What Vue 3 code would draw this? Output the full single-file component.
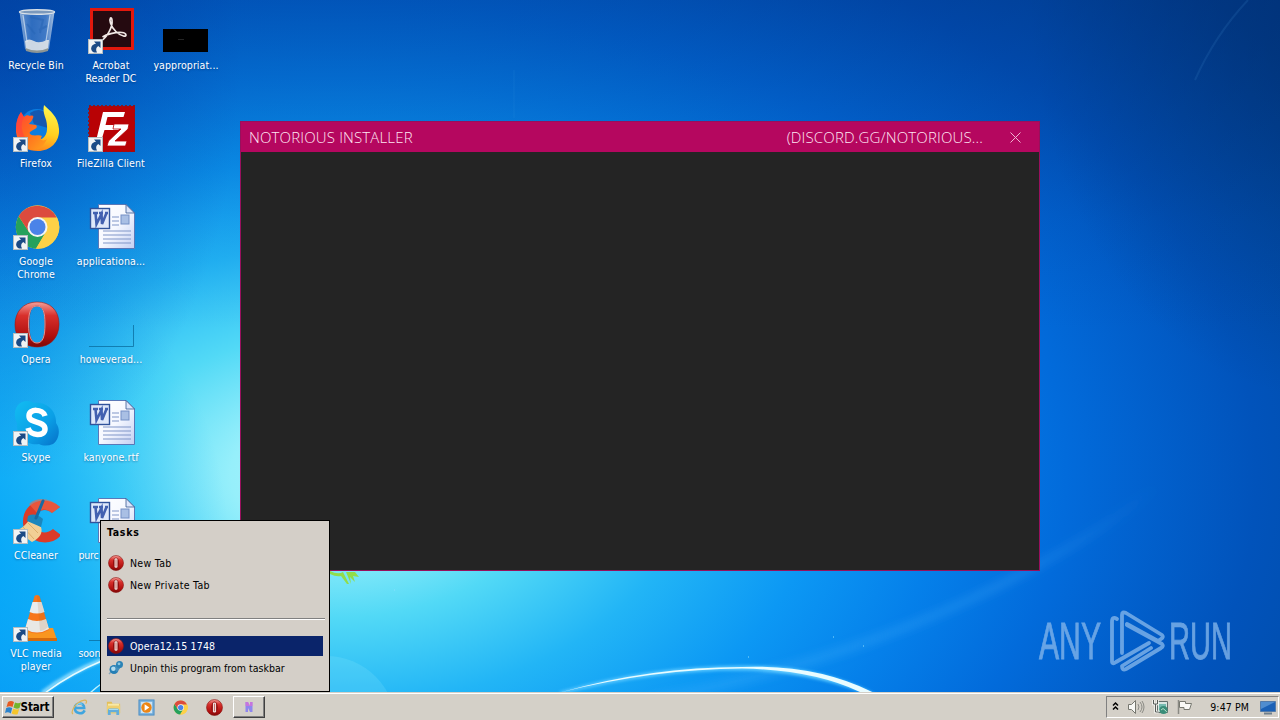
<script setup>
    import { ref } from 'vue'

    // desktop shortcuts, filled column by column (7 rows each)
    const shortcuts = [
        { icon: 'bin', label: 'Recycle Bin' },
        { icon: 'firefox', label: 'Firefox', link: true },
        { icon: 'chrome', label: 'Google Chrome', link: true },
        { icon: 'opera', label: 'Opera', link: true },
        { icon: 'skype', label: 'Skype', link: true },
        { icon: 'ccleaner', label: 'CCleaner', link: true },
        { icon: 'vlc', label: 'VLC media player', link: true },
        { icon: 'acrobat', label: 'Acrobat Reader DC', link: true },
        { icon: 'filezilla', label: 'FileZilla Client', link: true },
        { icon: 'word', label: 'applicationa...' },
        { icon: 'blank', label: 'howeverad...' },
        { icon: 'word', label: 'kanyone.rtf' },
        { icon: 'word', label: 'purc', covered: true },
        { icon: 'blank', label: 'soon', covered: true },
        { icon: 'black', label: 'yappropriat...' }
    ]

    const tasks = [
        { icon: 'opera-ball', label: 'New Tab' },
        { icon: 'opera-ball', label: 'New Private Tab' }
    ]

    const programs = [
        { icon: 'opera-ball', label: 'Opera12.15 1748' },
        { icon: 'pin', label: 'Unpin this program from taskbar' }
    ]

    const pinned = ['ie', 'folder', 'media', 'chrome-small', 'opera-ball']

    const selected = ref(0)
    const isWindowOpen = ref(true)
</script>

<template>
    <div class="screen">
        <!-- shared icon shapes -->
        <svg class="defs" width="0" height="0" aria-hidden="true">
            <defs>
                <linearGradient id="gRed" x1="0" y1="0" x2="0" y2="1">
                    <stop offset="0" stop-color="#f3a09a" />
                    <stop offset=".3" stop-color="#d8302c" />
                    <stop offset=".75" stop-color="#b0100f" />
                    <stop offset="1" stop-color="#7d0808" />
                </linearGradient>
                <linearGradient id="gGlass" x1="0" y1="0" x2="1" y2="0">
                    <stop offset="0" stop-color="#b9d0e8" stop-opacity=".75" />
                    <stop offset=".35" stop-color="#5f8fd0" stop-opacity=".5" />
                    <stop offset=".75" stop-color="#7ba4da" stop-opacity=".6" />
                    <stop offset="1" stop-color="#d5e2ef" stop-opacity=".8" />
                </linearGradient>
                <linearGradient id="gFox" x1="0" y1="0" x2="1" y2="1">
                    <stop offset="0" stop-color="#ff4338" />
                    <stop offset=".45" stop-color="#ff6a20" />
                    <stop offset="1" stop-color="#ffa51c" />
                </linearGradient>
                <linearGradient id="gTail" x1=".4" y1="0" x2=".2" y2="1">
                    <stop offset="0" stop-color="#fff44a" />
                    <stop offset=".55" stop-color="#ffce20" />
                    <stop offset="1" stop-color="#ff7a1c" />
                </linearGradient>
                <linearGradient id="gSkype" x1="0" y1="0" x2="1" y2="1">
                    <stop offset="0" stop-color="#12bdf2" />
                    <stop offset=".6" stop-color="#0a9fe6" />
                    <stop offset="1" stop-color="#0670c8" />
                </linearGradient>
                <linearGradient id="gPage" x1="0" y1="0" x2="1" y2="1">
                    <stop offset="0" stop-color="#fff" />
                    <stop offset=".5" stop-color="#f6f8ff" />
                    <stop offset="1" stop-color="#c3cff2" />
                </linearGradient>
            </defs>

            <symbol id="arrow" viewBox="0 0 15 15">
                <rect x=".5" y=".5" width="14" height="14" fill="#f1f3f4" stroke="#b4bdc1" />
                <path d="M6 2.500H12.500V9L10.300 7C8 8.500 7.500 10.500 9 13.500H6C3.500 12.500 2.500 10 3.500 7.800C4.300 6 6 5 8 4.800z" fill="#1b4a85" />
            </symbol>

            <symbol id="bin" viewBox="0 0 48 48">
                <path d="M7.500 6L13 43Q25 50 37 43L42.500 6z" fill="url(#gGlass)" />
                <path d="M12 9h26l-4 24Q25 38 16 33z" fill="#2f6fc4" opacity=".35" />
                <path d="M13 35Q17 32 22 35T35 34L37 34 36 43Q25 49 14 43z" fill="#e8eaea" opacity=".85" />
                <path d="M13.500 42Q25 47 36.500 42L36 45Q25 49 14 45z" fill="#8d9594" />
                <path d="M18 11l13 3-3 13M15 18l8 10M27 24l8-4" stroke="#2866b5" stroke-width="2" fill="none" opacity=".6" />
                <path d="M11 9l4 27M38 9l-4 26" stroke="#e9f3fa" stroke-width="1.200" opacity=".6" />
                <ellipse cx="25" cy="6" rx="17.500" ry="2.300" fill="#7b99bc" stroke="#d9e1e8" stroke-width="1.400" />
            </symbol>

            <symbol id="acrobat" viewBox="0 0 48 48">
                <rect x="3" y="2" width="44" height="42" fill="#e2180d" />
                <rect x="6" y="5" width="38" height="36" fill="#250a10" />
                <path d="M14 35C19 32 26 22 25 14C24.500 10 22 12 23.500 17C25.500 24 32 29 36.500 30C40 31 40 27 35 26.500C28 26 19 28.500 15.500 31" fill="none" stroke="#f2e9e6" stroke-width="1.700" />
            </symbol>

            <symbol id="black" viewBox="0 0 48 48">
                <path d="M1 23h45v23H1z" fill="#000" />
                <path d="M16 33.500h6" stroke="#252525" />
            </symbol>

            <symbol id="blank" viewBox="0 0 48 48">
                <path d="M2 46.500h44.500V25" fill="none" stroke="#096b9c" stroke-width="1" opacity=".75" />
            </symbol>

            <symbol id="firefox" viewBox="0 0 48 48">
                <circle cx="25" cy="22" r="17" fill="#0a7de0" />
                <path d="M18 9Q27 3 34 9L36 24 22 20z" fill="#1558b0" />
                <path d="M32 1C38 7 46 12 47 25C48 38 38 47 26 47C16 47 8 43 5 33L20 36C30 38 36 32 35 22C35 14 30 10 32 1z" fill="url(#gTail)" />
                <path d="M4 24C4 18 6 12 9 8L12 13C14 11 16 11 18 12C21 11 22 12 21 14C20 17 18 18 17 20L24 21C26 23 24 25 21 26C18 28 17 28 18 30C22 33 27 30 30 32C27 36 31 38 35 35C31 43 28 46 22 46C11 44 3 36 4 24z" fill="url(#gFox)" />
                <path d="M4 24C4 18 6 12 9 8L12 13C8 19 9 30 16 37C12 38 5 33 4 24z" fill="#ff3e44" opacity=".55" />
            </symbol>

            <symbol id="filezilla" viewBox="0 0 48 48">
                <rect x="2" y="2" width="46" height="46" fill="#b80205" stroke="#8c1420" stroke-width="2" stroke-dasharray="2 2" />
                <path d="M16 8h22l-1.500 5H20.500l-2 8H33l-1.500 5H17.500L13 41H8z" fill="#fff" />
                <path d="M27 20h15l-1 5-13 12h12l-1.500 5H20l1.500-5 12.500-12H26z" fill="#fff" stroke="#b80205" stroke-width=".8" />
            </symbol>

            <symbol id="chrome" viewBox="0 0 48 48">
                <circle cx="25.500" cy="25" r="21.700" fill="#fdd147" />
                <path d="M6.700 14.200A21.700 21.700 0 0 0 24 46.600L33.500 30.500 17 30z" fill="#25a15c" />
                <path d="M25.500 15.500H45A21.700 21.700 0 0 1 24 46.700L34 30z" fill="#fdd147" />
                <path d="M6.700 14.200A21.700 21.700 0 0 1 44.600 15.500H25.500L17 30z" fill="#dc4b3e" />
                <circle cx="25.500" cy="25" r="10" fill="#f5f5f2" />
                <circle cx="25.500" cy="25" r="8" fill="#4b83e8" />
            </symbol>

            <symbol id="word" viewBox="0 0 48 48">
                <path d="M11.500 2.500H39L47.500 11V46.500H11.500z" fill="url(#gPage)" stroke="#5a78b8" />
                <path d="M39 2.500V11h8.500z" fill="#dce5fa" stroke="#38588f" stroke-width=".8" />
                <path d="M25 15h7M25 19h7M25 23h7M16 29h28M16 33h28M16 37h28M16 41h28" stroke="#8095c8" stroke-width="1.200" />
                <rect x="34" y="13" width="8" height="9" fill="#a9bfe4" stroke="#7590c6" />
                <rect x="3.500" y="6.500" width="19" height="20" fill="#dfe8fa" stroke="#31539b" stroke-width="1.400" />
                <path d="M6 11h5M12 11h4M18 11h3M8.500 11l1 11 5-10 .5 10 4.500-11" fill="none" stroke="#4260b0" stroke-width="2.600" />
            </symbol>

            <symbol id="opera" viewBox="0 0 48 48">
                <path fill-rule="evenodd" d="M25 2C11 2 3 12 3 25S12 47 25 47 47 38 47 24 38 2 25 2zM25 6C31 6 33 12 33 24S31 43 25 43 17 36 17 24 19 6 25 6z" fill="url(#gRed)" stroke="#9b1714" stroke-width=".6" />
                <path d="M16.500 24C16.500 12 19 6 25 6s8 6 8 18-2 19-8 19-8.500-7-8.500-19z" fill="none" stroke="#dc9696" stroke-width="1" />
            </symbol>

            <symbol id="skype" viewBox="0 0 48 48">
                <path d="M6 7C10 2 18 2 22 5C34 3 45 13 44 25C49 31 47 42 41 46C36 48 31 48 27 46C15 48 4 38 5 25C2 19 2 12 6 7z" fill="url(#gSkype)" />
                <path d="M33 18C31 11 17 10 17 18C17 26 33 22 33 31C33 39 18 38 16 30" fill="none" stroke="#fff" stroke-width="5.500" />
            </symbol>

            <symbol id="ccleaner" viewBox="0 0 48 48">
                <path d="M48 11L40 17C32 10 22 16 23 27C24 37 34 39 41 33L49 39C38 53 12 46 11 27C10 7 32-3 48 11z" fill="#dc3b28" />
                <path d="M48 11L40 17C34 12 28 13 25 17L17 8C26 0 38 2 48 11z" fill="#f0694a" opacity=".6" />
                <path d="M17 24L29 31C31 37 28 42 20 46L3 34C8 34 13 30 17 24z" fill="#f2cf95" />
                <path d="M11 31l11 12M7 34l8 8M16 27l10 10" stroke="#dcae6b" stroke-width="1" />
                <path d="M16 20Q23 16 31 23L29 31 15 25z" fill="#1b86bd" />
                <path d="M31 5L24 22" stroke="#176ba3" stroke-width="3" stroke-linecap="round" />
            </symbol>

            <symbol id="vlc" viewBox="0 0 48 48">
                <path d="M10 34h31l4 12H6z" fill="#f9961f" />
                <path d="M6 44h39v3H6z" fill="#d56a0c" />
                <path d="M22.500 2Q25 0 27.500 2L37 36Q25 43 13 36z" fill="#f7761b" />
                <path d="M20.500 8h9l3 10q-7.500 3-15 0z" fill="#e9ecee" />
                <path d="M16 25q9 4 18 0l3 10Q25 42 13 35z" fill="#e8e8e5" />
                <path d="M25 2l3 0 8 31q-4 4-8 4z" fill="#aa5d1c" opacity=".15" />
            </symbol>

            <symbol id="opera-ball" viewBox="0 0 16 16">
                <circle cx="8" cy="8" r="7.500" fill="url(#gRed)" stroke="#8c1512" stroke-width=".6" />
                <ellipse cx="8" cy="8" rx="3" ry="5.600" fill="#8e0d0d" />
                <rect x="6.500" y="3.300" width="3" height="9.400" rx="1.200" fill="#efdeda" />
                <path d="M8 4.500v7" stroke="#bf5a55" stroke-width=".8" />
            </symbol>

            <symbol id="pin" viewBox="0 0 16 16">
                <path d="M1 14l5-5" stroke="#86a5b8" stroke-width="1.500" />
                <circle cx="6" cy="9.500" r="4.500" fill="#247eb5" />
                <path d="M5 8l5-5 4 3-5 6z" fill="#438fbd" />
                <circle cx="11.500" cy="4.500" r="3.500" fill="#2b83b6" />
                <circle cx="5.300" cy="8.800" r="2.200" fill="#b3dcee" />
                <circle cx="11" cy="3.800" r="1.400" fill="#8dc8e1" />
            </symbol>

            <symbol id="ie" viewBox="0 0 18 18">
                <path d="M14.500 12C12 17 4 15.500 4 9.500S14 3 14 9.500H5" fill="none" stroke="#3fa5df" stroke-width="2.700" />
                <path d="M2 16C-1 13 6 3 13 1.500C17 .5 17 3 15.500 5" fill="none" stroke="#dcb55a" stroke-width="1.300" />
                <path d="M5.500 7Q8 3.500 12 5.500" fill="none" stroke="#9bdcf5" stroke-width="1" />
            </symbol>

            <symbol id="folder" viewBox="0 0 18 18">
                <path d="M2 3h5l1 2h8v10H2z" fill="#e3bf59" />
                <path d="M3 5h12v4H3z" fill="#f8e9a7" />
                <path d="M2 7h14v8H2z" fill="#f0d070" />
                <path d="M3 17v-5q0-2 2-2h8q2 0 2 2v5h-3v-3H6v3z" fill="#62addb" />
                <path d="M4 11h10" stroke="#b9e5f5" />
            </symbol>

            <symbol id="media" viewBox="0 0 18 18">
                <rect x="1" y="1" width="16" height="16" fill="#74aedb" stroke="#4d8fc4" />
                <rect x="3" y="3" width="12" height="12" fill="#cce3f3" />
                <circle cx="9" cy="9" r="5.500" fill="#ed8514" />
                <path d="M7 5.500l5 3.500-5 3.500z" fill="#fff" />
            </symbol>

            <symbol id="chrome-small" viewBox="-1 -1 52 52">
                <use href="#chrome" width="48" height="48" />
            </symbol>
        </svg>

        <main class="desktop">
            <!-- wallpaper light streaks and leaves -->
            <svg class="wallpaper" viewBox="0 0 1280 692" width="1280" height="692" aria-hidden="true">
                <defs>
                    <filter id="soft" x="-20%" y="-20%" width="140%" height="140%">
                        <feGaussianBlur stdDeviation="4" />
                    </filter>
                    <filter id="glow" x="-10%" y="-100%" width="120%" height="300%">
                        <feGaussianBlur stdDeviation="1.500" />
                    </filter>
                    <linearGradient id="gRay" gradientUnits="userSpaceOnUse" x1="650" y1="700" x2="1160" y2="490">
                        <stop offset="0" stop-color="#54baff" stop-opacity=".25" />
                        <stop offset=".7" stop-color="#54baff" stop-opacity=".2" />
                        <stop offset="1" stop-color="#54baff" stop-opacity="0" />
                    </linearGradient>
                </defs>
                <path d="M650 700Q840 665 1000 585Q1100 535 1165 480" fill="none" stroke="url(#gRay)" stroke-width="9" filter="url(#soft)" />
                <path d="M1195 80Q1215 35 1248 0" fill="none" stroke="#3c87c9" stroke-width="2" opacity=".18" />
                <path d="M514 70v48" stroke="#52a7e3" opacity=".12" />
                <circle cx="326" cy="726" r="70" fill="#9ff0ff" opacity=".16" />
                <path d="M560 693Q650 667 742 667Q820 666 878 697Q817 671 742 669Q654 669 560 693z" fill="#c5f4ff" stroke="#56c6ff" stroke-width="3" filter="url(#glow)" />
                <path d="M560 692.500Q650 667 742 667Q820 664 878 695H866Q818 670 742 668.500Q654 669 560 692.500z" fill="#e9fcff" />
                <path d="M42 693Q68 673 104 659" fill="none" stroke="#ace9ff" stroke-width="4" opacity=".8" filter="url(#glow)" />
                <path d="M45 693Q70 674 104 660" fill="none" stroke="#e5fbff" stroke-width="1.500" />
                <path d="M88 695Q95 688 104 682" fill="none" stroke="#baf0ff" stroke-width="1.500" />
                <path d="M330 571q8 4 13 1l6 12-2 0-6-8q-5 1-11-2zM346 572l5 12-1-7 5 5-2-6 6 1-4-5z" fill="#92dc4b" />
                <path d="M748 657h1M863 646h1M833 637h1M394 590h1" stroke="#8edfff" />
            </svg>

            <div class="shortcuts">
                <div v-for="(item, idx) in shortcuts" :key="idx" :class="['shortcut', { covered: item.covered }]">
                    <svg class="shortcut_icon" width="48" height="48">
                        <use :href="'#' + item.icon" width="48" height="48" />
                        <use v-if="item.link" href="#arrow" x="1" y="33" width="15" height="15" />
                    </svg>
                    <span class="shortcut_label">{{ item.label }}</span>
                </div>
            </div>

            <svg class="watermark" viewBox="0 0 240 80" width="240" height="80">
                <g class="watermark_text">
                    <text x="4" y="54" textLength="62" lengthAdjust="spacingAndGlyphs">ANY</text>
                    <text x="134" y="54" textLength="63" lengthAdjust="spacingAndGlyphs">RUN</text>
                </g>
                <g fill="none" stroke="currentColor" stroke-width="3.800" stroke-linejoin="round" stroke-linecap="round">
                    <path d="M82 14Q77 11 77 17V56Q77 60 81 57L114 38" />
                    <path d="M87 48V10Q87 6 91 8L127 30Q129 32 126 34L123 36L92 19" />
                    <path d="M92 20L127 39Q129 41 126 43L91 64Q87 66 87 61L116 43" />
                </g>
            </svg>

            <section v-if="isWindowOpen" class="window">
                <header class="window_bar">
                    <span class="window_title">NOTORIOUS INSTALLER</span>
                    <span class="window_link">(DISCORD.GG/NOTORIOUS...</span>
                    <svg class="window_close" width="11" height="11" @click="isWindowOpen = false">
                        <path d="M.5.5l10 10M10.500.5l-10 10" stroke="#f0b5d2" />
                    </svg>
                </header>
            </section>
        </main>

        <div class="jumplist">
            <strong class="jumplist_title">Tasks</strong>
            <div class="jumplist_group">
                <div v-for="item in tasks" :key="item.label" class="jumplist_item wide">
                    <svg width="16" height="16"><use :href="'#' + item.icon" width="16" height="16" /></svg>
                    <span>{{ item.label }}</span>
                </div>
            </div>
            <div class="jumplist_line"></div>
            <div class="jumplist_group">
                <div
                    v-for="(item, idx) in programs"
                    :key="item.label"
                    :class="['jumplist_item', { active: idx === selected }]"
                    @mouseenter="selected = idx"
                >
                    <svg width="16" height="16"><use :href="'#' + item.icon" width="16" height="16" /></svg>
                    <span>{{ item.label }}</span>
                </div>
            </div>
        </div>

        <footer class="taskbar">
            <button class="start">
                <svg width="17" height="17" viewBox="0 0 17 17">
                    <path d="M3 3q3-2 6 0L7.500 8Q5 6.500 1.500 8z" fill="#e65b22" />
                    <path d="M10 3.500q3 1.500 6 0L14.500 9q-3 1.500-6-.5z" fill="#73b52c" />
                    <path d="M1.200 9q3-1.500 6 0L5.800 14.500Q3 12.500 0 14z" fill="#2a83cd" />
                    <path d="M8.200 9.700q3 1.500 6 .2l-1.600 5.300q-3 1-6-.7z" fill="#f5c52b" />
                </svg>
                Start
            </button>
            <div class="pinned">
                <svg v-for="name in pinned" :key="name" width="17" height="17">
                    <use :href="'#' + name" width="17" height="17" />
                </svg>
            </div>
            <button class="running">
                <svg width="12" height="14" viewBox="0 0 12 14">
                    <path d="M2.500 2h2.500l2 4V2h2.500v10H7L5 8v4H2.500z" fill="#8f86ee" />
                    <path d="M2.500 2h2.500l2 4V2h2.500v4h-7z" fill="#e46ad6" opacity=".65" />
                </svg>
            </button>
            <div class="tray">
                <svg width="9" height="12" viewBox="0 0 9 12">
                    <path d="M2 4.500l2.500-2.500 2.500 2.500M2 8.500l2.500-2.500 2.500 2.500" fill="none" stroke="#000" stroke-width="1.500" />
                </svg>
                <svg width="18" height="16" viewBox="0 0 18 16">
                    <path d="M1.500 5.500h3l4-4v13l-4-4h-3z" fill="#f8f8f5" stroke="#76776f" />
                    <path d="M11 5q2 3 0 6M13 3q4 5 0 10M15 2q4 6 0 12" fill="none" stroke="#8b8b85" />
                </svg>
                <svg width="17" height="16" viewBox="0 0 17 16">
                    <path d="M5.500 2.500h10v11h-10z" fill="#d8e6e2" stroke="#626f6b" />
                    <path d="M7 5h7v6H7z" fill="#75bbb0" />
                    <circle cx="11.500" cy="11" r="4" fill="#398d79" />
                    <path d="M9 11q2-3 4 0t2 1" stroke="#b4dfc7" fill="none" />
                    <path d="M1.500 1v4h4V1M3.500 5v8h3" fill="none" stroke="#f8f8f5" stroke-width="2.500" />
                    <path d="M1.500 1v4h4V1M3.500 5v8h3" fill="none" stroke="#575c58" />
                </svg>
                <svg width="17" height="16" viewBox="0 0 17 16">
                    <path d="M2.500 1v14" stroke="#8a8a84" stroke-width="1.500" />
                    <path d="M3.500 2.500h6v2h6l-2 6H8v-2H3.500z" fill="#f9f9f6" stroke="#777870" />
                </svg>
                <time class="clock">9:47 PM</time>
                <svg class="show_desktop" width="16" height="15" viewBox="0 0 16 15">
                    <path d="M.5 1.500h15v10H.5z" fill="#1b61b6" stroke="#547ba9" />
                    <path d="M1 2h14L1 9z" fill="#508dcf" />
                    <path d="M4 13.500h8" stroke="#6f7f8c" stroke-width="2" />
                </svg>
            </div>
        </footer>
    </div>
</template>

<style>
    body {
        margin: 0;
        overflow: hidden;
    }
</style>

<style scoped>
    .screen {
        position: relative;
        display: flex;
        flex-direction: column;
        width: 1280px;
        height: 720px;
        overflow: hidden;
        font-family: "DejaVu Sans Condensed", "DejaVu Sans", sans-serif;
        font-stretch: condensed;
        font-size: 10.5px;
        cursor: default;
    }

    .defs {
        position: absolute;
    }

    /* 桌面 */
    .desktop {
        position: relative;
        height: 692px;
        background:
            linear-gradient(to bottom, rgba(0, 42, 120, 0.35) 0, rgba(0, 60, 150, 0.1) 220px, rgba(0, 60, 150, 0) 330px),
            radial-gradient(ellipse 240px 420px at 0 60px, rgba(0, 60, 165, 0.5), rgba(0, 60, 165, 0)),
            radial-gradient(ellipse 250px 330px at -20px 560px, rgba(0, 165, 248, 0.8), rgba(0, 170, 250, 0)),
            radial-gradient(ellipse 300px 400px at 1330px 0, rgba(0, 40, 90, 0.55), rgba(0, 40, 90, 0)),
            radial-gradient(ellipse 950px 620px at 335px 475px, #b4f6fc 0, #96effb 11%, #52d9f6 23%, #22b5f6 37%, #0c98f4 51%, #0580ea 64%, #026bdb 77%, #0153bb 97%, #01479c 120%);
    }

    .wallpaper {
        position: absolute;
        top: 0;
        left: 0;
    }

    .shortcuts {
        position: relative;
        display: grid;
        grid-auto-flow: column;
        grid-template-rows: repeat(7, 98px);
        grid-auto-columns: 75px;
        margin-left: -1.5px;
        padding-top: 6px;
        width: 225px;
    }

    .shortcut {
        display: flex;
        flex-direction: column;
        align-items: center;
        gap: 5px;
    }

    .shortcut_icon {
        display: block;
        overflow: visible;
        flex-shrink: 0;
    }

    .shortcut_label {
        max-width: 70px;
        color: #fff;
        line-height: 13px;
        letter-spacing: 0.1px;
        text-align: center;
        text-shadow: 0 1px 2px rgba(0, 35, 90, 0.45);
    }

    .shortcut.covered .shortcut_label {
        align-self: flex-start;
        padding-left: 5px;
        letter-spacing: -0.2px;
    }

    /* 浮水印 */
    .watermark {
        position: absolute;
        left: 1035px;
        top: 605px;
        color: #81b4ea;
        opacity: 0.8;
    }

    .watermark_text {
        fill: currentColor;
        stroke: currentColor;
        stroke-width: 0.9px;
        font-family: "Liberation Sans Narrow", "Liberation Sans", sans-serif;
        font-size: 52px;
    }

    /* 安裝程式視窗 */
    .window {
        position: absolute;
        left: 240px;
        top: 121px;
        box-sizing: border-box;
        width: 800px;
        height: 450px;
        border: 1px solid #98105c;
        background-color: #242424;
    }

    .window_bar {
        display: flex;
        align-items: center;
        box-sizing: border-box;
        height: 30px;
        padding: 0 18px 0 8px;
        background-color: #b5075f;
        color: #ffe6f2;
        font-family: "Open Sans", sans-serif;
        font-weight: 300;
        font-stretch: normal;
        font-size: 15px;
        letter-spacing: 0.15px;
    }

    .window_link {
        margin-left: auto;
        margin-right: 27px;
    }

    /* 捷徑清單 */
    .jumplist {
        position: absolute;
        left: 100px;
        bottom: 28px;
        box-sizing: border-box;
        width: 230px;
        height: 172px;
        padding: 5px 6px;
        border: 1px solid #000;
        background-color: #d4cfc8;
        color: #000;
    }

    .jumplist_title {
        display: block;
        height: 27px;
        line-height: 13px;
        letter-spacing: 0.7px;
    }

    .jumplist_group {
        display: flex;
        flex-direction: column;
        gap: 2px;
        width: 216px;
    }

    .jumplist_item {
        display: flex;
        align-items: center;
        gap: 6px;
        height: 20px;
        padding-left: 1px;
        white-space: nowrap;
    }

    .jumplist_item.wide {
        letter-spacing: 0.3px;
    }

    .jumplist_item.active {
        background-color: #0a246a;
        color: #fff;
        letter-spacing: 0.15px;
    }

    .jumplist_line {
        width: 218px;
        height: 1px;
        margin: 23px 0 16px;
        border-top: 1px solid #808080;
        background-color: #fff;
    }

    /* 工作列 */
    .taskbar {
        display: flex;
        align-items: flex-start;
        box-sizing: border-box;
        height: 28px;
        padding: 3px 1px 0 2px;
        border-top: 1px solid #d4d0c8;
        background-color: #d4d0c8;
        box-shadow: inset 0 1px #fff;
    }

    .start,
    .running {
        display: flex;
        align-items: center;
        justify-content: center;
        box-sizing: border-box;
        height: 22px;
        margin: 0;
        padding: 0;
        border: 1px solid;
        border-color: #fff #404040 #404040 #fff;
        background-color: #d4d0c8;
        box-shadow: inset -1px -1px #808080;
        color: #000;
        font: inherit;
    }

    .start {
        width: 52px;
        font-weight: bold;
        font-size: 11.5px;
        letter-spacing: -0.1px;
    }

    .start svg {
        margin-left: -2px;
        margin-right: -1px;
    }

    .pinned {
        display: flex;
        gap: 16.700px;
        margin: 3px 10px 0 17px;
    }

    .running {
        width: 32px;
    }

    .tray {
        display: flex;
        align-items: center;
        box-sizing: border-box;
        gap: 7px;
        width: 173px;
        height: 22px;
        margin-left: auto;
        padding: 0 2px 0 4px;
        border: 1px solid;
        border-color: #808080 #fff #fff #808080;
    }

    .clock {
        margin-left: auto;
        white-space: nowrap;
        letter-spacing: 0.1px;
    }

    .show_desktop {
        margin-left: 4px;
    }
</style>
